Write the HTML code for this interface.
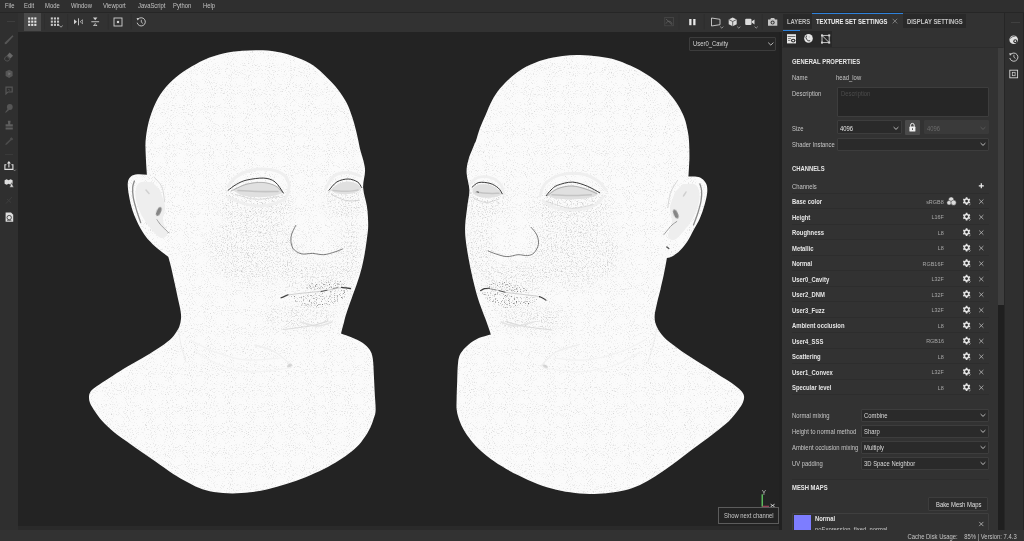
<!DOCTYPE html>
<html><head><meta charset="utf-8"><title>Substance 3D Painter</title>
<style>
*{box-sizing:border-box;margin:0;padding:0}
html,body{width:1024px;height:541px;overflow:hidden;background:#282828}
body{font-family:"Liberation Sans",sans-serif;font-size:6.4px;color:#c4c4c4;position:relative}
.abs{position:absolute}
#menubar{left:0;top:0;width:1024px;height:12px;background:#2f2f2f}
#menubar span{position:absolute;top:2px;font-size:6.6px;color:#c2c2c2;line-height:8px;transform:scaleX(.89);transform-origin:0 50%}
#toolbar{left:0;top:12px;width:782px;height:19.5px;background:#323232}
#leftbar{left:0;top:31px;width:18px;height:499px;background:#2f2f2f}
#viewport{left:18px;top:31.5px;width:761.3px;height:494.3px;background:#232323;overflow:hidden}
#panel{left:782px;top:12px;width:222.3px;height:518px;background:#323232;overflow:hidden}
#rightbar{left:1004.3px;top:12px;width:19.7px;height:518px;background:#2f2f2f}
#status{left:0;top:530px;width:1024px;height:11px;background:#323232}
.t{position:absolute;white-space:nowrap;line-height:8px;margin-top:0.5px;transform:scaleX(.89);transform-origin:0 50%}
.b{font-weight:bold;color:#e2e2e2}

#panel .t{font-size:6.6px;color:#c6c6c6}
#panel .b{font-weight:bold;color:#e6e6e6}
#panel .f{color:#a8a8a8;font-size:6.1px;text-align:right;transform-origin:100% 50%}
.sel{position:absolute;background:#2a2a2a;border:0.6px solid #3d3d3d;border-radius:1px}
.sep{position:absolute;left:10px;width:197px;height:0.7px;background:#2d2d2d}
</style></head><body>
<div id="menubar" class="abs">
<span style="left:5px">File</span><span style="left:24px">Edit</span><span style="left:45px">Mode</span><span style="left:71px">Window</span><span style="left:103px">Viewport</span><span style="left:138px">JavaScript</span><span style="left:173px">Python</span><span style="left:203px">Help</span>
</div>
<div id="toolbar" class="abs">

<div class="abs" style="left:0;top:0;width:18px;height:19px;background:#2f2f2f"></div>
<div class="abs" style="left:7.4px;top:9.4px;width:7.4px;height:0.9px;background:#3e3e3e"></div>
<div class="abs" style="left:0;top:-0.3px;width:1024px;height:0.7px;background:#262626;z-index:3"></div>
<div class="abs" style="left:24px;top:1.3px;width:17.2px;height:18.2px;background:#4a4a4a"></div>
<svg class="abs" style="left:0;top:0" width="782" height="19" viewBox="0 12 782 19">
<g fill="#e4e4e4">
<rect x="28.1" y="17.4" width="2.1" height="2.1"/><rect x="31.2" y="17.4" width="2.1" height="2.1"/><rect x="34.3" y="17.4" width="2.1" height="2.1"/>
<rect x="28.1" y="20.6" width="2.1" height="2.1"/><rect x="31.2" y="20.6" width="2.1" height="2.1"/><rect x="34.3" y="20.6" width="2.1" height="2.1"/>
<rect x="28.1" y="23.8" width="2.1" height="2.1"/><rect x="31.2" y="23.8" width="2.1" height="2.1"/><rect x="34.3" y="23.8" width="2.1" height="2.1"/>
</g>
<g fill="#c6c6c6">
<rect x="50.8" y="17.4" width="2.1" height="2.1"/><rect x="53.9" y="17.4" width="2.1" height="2.1"/><rect x="57" y="17.4" width="2.1" height="2.1"/>
<rect x="50.8" y="20.6" width="2.1" height="2.1"/><rect x="53.9" y="20.6" width="2.1" height="2.1"/><rect x="57" y="20.6" width="2.1" height="2.1"/>
<rect x="50.8" y="23.8" width="2.1" height="2.1"/><rect x="53.9" y="23.8" width="2.1" height="2.1"/><rect x="57" y="23.8" width="2.1" height="2.1"/>
</g>
<path d="M59.3,25.6 l1.7,1.6 l1.7,-1.6" fill="none" stroke="#bdbdbd" stroke-width="0.8"/>
<g stroke="#2b2b2b" stroke-width="0.6"><path d="M44.5,14v15.5M67.6,14v15.5M108.4,14v15.5M131.2,14v15.5M679,14v15.5M704.2,14v15.5M762.4,14v15.5"/></g>
<!-- symmetry -->
<g fill="#d0d0d0" stroke="none">
<path d="M74,19.3 l3,2.5 l-3,2.5z M82.8,19.3 l-3,2.5 l3,2.5z"/><rect x="78" y="18.3" width="0.9" height="7"/>
<path d="M82.3,20.3 l-1.8,1.5 l1.8,1.5z" fill="#323232"/>
</g>
<g fill="#d0d0d0"><path d="M93,17.6 h4.4 l-2.2,2.7z"/><rect x="91.3" y="21.3" width="7.8" height="0.9"/><path d="M93,26 h4.4 l-2.2,-2.9z M94.2,25.3 h2 l-1,-1.3z" fill-rule="evenodd"/></g>
<rect x="114" y="18" width="8" height="8" fill="none" stroke="#d0d0d0" stroke-width="0.9"/><rect x="116.9" y="20.9" width="2.2" height="2.2" fill="#d0d0d0"/>
<g fill="none" stroke="#d0d0d0" stroke-width="0.9"><path d="M138,19.3 a4.1,4.1 0 1 1 -0.8,3.4"/><path d="M141.3,19.8v2.4l1.6,1.2" stroke-width="0.8"/></g><path d="M136.6,18 l2.6,0.3 l-1.8,2.2z" fill="#d0d0d0"/>
<!-- right group -->
<g fill="none" stroke="#6a6a6a" stroke-width="0.7"><rect x="664.8" y="17.6" width="8.6" height="8.2" stroke="#4a4a4a"/><path d="M666,23.5 c1.5,-3 4.5,-3 6,0 M666,19 l6.3,5.8"/></g>
<g fill="#e8e8e8"><rect x="689.2" y="19" width="2.3" height="6.2"/><rect x="693.2" y="19" width="2.3" height="6.2"/></g>
<path d="M711.5,18 l8.5,1.3 v5.4 l-8.5,1.3z" fill="none" stroke="#cfcfcf" stroke-width="0.9"/>
<g fill="none" stroke="#a8a8a8" stroke-width="0.8"><path d="M720.2,26.6 l1.6,1.5 l1.6,-1.5 M737.2,26.6 l1.6,1.5 l1.6,-1.5 M754.6,26.6 l1.6,1.5 l1.6,-1.5"/></g>
<g><path d="M732.7,17.4 l4,2 v4.8 l-4,2 l-4,-2 v-4.8z" fill="#dcdcdc"/><path d="M728.9,19.6 l3.8,1.9 l3.8,-1.9 M732.7,21.5 v4.5" fill="none" stroke="#323232" stroke-width="0.7"/></g>
<g fill="#dcdcdc"><rect x="745.2" y="18.8" width="6.3" height="6.2" rx="1"/><path d="M751.8,21.2 l2.7,-1.8 v5 l-2.7,-1.8z"/></g>
<g><path d="M768,19.6 h2.2 l0.8,-1.5 h3.2 l0.8,1.5 h2.3 v6.2 h-9.3z" fill="#c4c4c4"/><circle cx="772.6" cy="22.6" r="2" fill="#323232"/><circle cx="772.6" cy="22.6" r="1.1" fill="#c4c4c4"/></g>
</svg>
</div>
<div id="leftbar" class="abs">
<svg class="abs" style="left:0;top:0" width="18" height="495" viewBox="0 31 18 495">
<g fill="#565656" stroke="none">
<path d="M4.9,42.6 L12.4,35.2 L13.5,36.3 L6.4,44 L4.7,44.2z"/>
<path d="M9.6,52.6 l3.4,3.2 l-2.6,2.8 l-3.4,-3.2z" fill="#686868"/><path d="M6.6,56 l3.4,3.2 l-1.7,1.8 h-2 l-1.6,-1.6 v-1.4z" fill="none" stroke="#5c5c5c" stroke-width="0.8"/>
<path d="M9.1,69.8 l3.5,1.7 v4.6 l-3.5,2 l-3.5,-2 v-4.6z"/><path d="M8.4,72.2 l2.4,1.6 l-2.4,1.6z" fill="#747474"/>
<path d="M5.4,86.6 h7.4 v6 h-4.6 l-2.8,2.6z M6.6,87.8 v4.6 l1.2,-1 h3.8 v-3.6z" fill-rule="evenodd"/><path d="M8.2,89.2 l2,1.4" stroke="#565656" stroke-width="0.8"/>
<circle cx="9.8" cy="107" r="2.9"/><path d="M8,108.4 l1.4,1.4 l-3.6,3 l-0.6,-0.6z"/>
<path d="M7.8,120.8 h2.8 l-0.4,3.4 h2.6 v2.4 h-7.2 v-2.4 h2.6z M5.6,127.6 h7.2 v1.8 h-7.2z" fill="#5e5e5e"/>
<path d="M11.4,137.2 l1.9,1.9 l-1.4,1.4 l-0.5,-0.5 l-4.4,4.4 l-1.8,0.7 l0.7,-1.8 l4.4,-4.4 l-0.5,-0.5z" fill="#4c4c4c"/>
</g>
<rect x="5" y="154.2" width="8" height="0.7" fill="#404040"/>
<g fill="none" stroke="#e0e0e0" stroke-width="1.1"><path d="M6.4,164.8 h-1.5 v4.6 h8 v-4.6 h-1.5 M8.9,167.4 v-5.4"/></g><path d="M6.9,163.6 l2,-2.6 l2,2.6z" fill="#e0e0e0"/>
<path d="M13.4,169.6 l1.2,1.3 l1.2,-1.3" fill="none" stroke="#9a9a9a" stroke-width="0.7"/>
<g fill="#dedede"><path d="M4.6,180.2 l2,-1 l2,1 l2,-1 l2,1 v3.6 l-2,1 l-2,-1 l-2,1 l-2,-1z"/><path d="M9.6,187.2 l2,-4.4 l2,4.4z" fill="#dedede" stroke="#2f2f2f" stroke-width="0.5"/></g>
<path d="M6,203.6 l6,-6.6 M7,199 l4,3.6" stroke="#3d3d3d" stroke-width="1" fill="none"/>
<g><path d="M5.6,212.6 h5.4 l2.2,2.2 v6.9 h-7.6z" fill="#dedede"/><circle cx="9.2" cy="217.6" r="2.2" fill="none" stroke="#2f2f2f" stroke-width="0.8"/><path d="M7,220.4 h4.4" stroke="#2f2f2f" stroke-width="0.6"/></g>
</svg>
</div>
<div id="viewport" class="abs">
<svg class="abs" style="left:0;top:-0.5px" width="761" height="495" viewBox="18 31 761 495">
<defs>
<filter id="nz" x="0" y="0" width="100%" height="100%" color-interpolation-filters="sRGB"><feTurbulence type="fractalNoise" baseFrequency="0.95" numOctaves="2" seed="7"/><feColorMatrix type="matrix" values="0 0 0 0 0.8  0 0 0 0 0.8  0 0 0 0 0.8  2.4 0 0 0 -1.34"/></filter>
<filter id="nz2" x="0" y="0" width="100%" height="100%" color-interpolation-filters="sRGB"><feTurbulence type="fractalNoise" baseFrequency="0.8" numOctaves="2" seed="11"/><feColorMatrix type="matrix" values="0 0 0 0 0.72  0 0 0 0 0.72  0 0 0 0 0.72  0 2.4 0 0 -1.3"/></filter>
<filter id="nz3" x="0" y="0" width="100%" height="100%" color-interpolation-filters="sRGB"><feTurbulence type="fractalNoise" baseFrequency="0.85" numOctaves="2" seed="23" result="t"/><feColorMatrix in="t" type="matrix" values="0 0 0 0 0.42  0 0 0 0 0.42  0 0 0 0 0.42  0 0 3.2 0 -1.75" result="n"/><feComposite in="n" in2="SourceGraphic" operator="in"/></filter>
<filter id="bl" x="-20%" y="-20%" width="140%" height="140%"><feGaussianBlur stdDeviation="5"/></filter>
<filter id="bs2" x="-30%" y="-30%" width="160%" height="160%"><feGaussianBlur stdDeviation="0.35"/></filter>
<filter id="bs" x="-20%" y="-20%" width="140%" height="140%"><feGaussianBlur stdDeviation="0.7"/></filter>
<clipPath id="cL"><path d="M146.9,174.7 C146.6,169.4 146.1,164.4 145.9,158.8 C145.7,153.2 145.2,146.7 145.6,141.0 C146.0,135.3 146.9,129.7 148.1,124.4 C149.3,119.1 150.8,114.4 152.8,109.4 C154.8,104.4 157.0,99.2 160.3,94.4 C163.6,89.6 168.0,84.5 172.5,80.3 C177.0,76.1 182.2,72.5 187.5,69.1 C192.8,65.7 198.5,62.3 204.4,59.7 C210.3,57.1 216.8,55.0 223.1,53.5 C229.4,52.0 235.6,51.3 242.2,50.8 C248.8,50.3 256.4,50.0 262.8,50.3 C269.2,50.6 274.8,51.4 280.6,52.6 C286.4,53.9 292.1,55.7 297.5,57.8 C302.9,59.9 308.1,62.0 313.0,65.3 C317.9,68.6 322.7,73.4 326.9,77.5 C331.1,81.6 334.8,85.5 338.1,89.7 C341.4,93.9 344.2,98.3 346.6,102.8 C349.0,107.3 350.6,112.4 352.2,116.9 C353.8,121.4 354.9,126.0 355.9,130.0 C356.9,134.0 357.7,137.8 358.4,141.1 C359.1,144.4 359.2,145.4 360.3,150.0 C361.4,154.6 364.5,162.6 365.0,168.8 C365.5,175.1 362.8,181.2 363.1,187.5 C363.4,193.8 366.0,200.1 366.9,206.3 C367.8,212.6 368.2,219.6 368.2,225.0 C368.2,230.4 367.6,233.3 366.9,238.8 C366.2,244.2 365.2,251.2 364.0,257.5 C362.8,263.8 361.3,270.0 359.4,276.2 C357.5,282.5 355.0,288.8 352.8,295.0 C350.6,301.2 347.8,309.1 346.3,313.8 C344.8,318.4 344.7,319.8 343.8,323.1 C342.9,326.4 341.9,330.0 341.0,333.4 C344.4,334.7 347.7,335.6 351.3,337.2 C354.9,338.8 359.4,340.6 362.5,342.8 C365.6,345.0 368.3,347.6 370.0,350.3 C371.7,353.0 372.2,354.9 372.8,358.8 C373.4,362.7 373.5,368.2 373.8,373.8 C374.1,379.4 374.4,386.4 374.7,392.5 C375.0,398.6 375.8,406.0 375.6,410.5 C375.4,415.0 374.5,416.0 373.4,419.4 C372.3,422.8 370.8,426.9 368.8,430.6 C366.8,434.4 364.1,438.4 361.3,441.9 C358.5,445.3 355.6,448.2 351.9,451.3 C348.1,454.4 343.5,457.6 338.8,460.6 C334.1,463.6 329.4,466.3 323.8,469.1 C318.2,471.9 311.2,475.0 305.0,477.5 C298.8,480.0 292.5,482.2 286.3,484.1 C280.1,486.1 273.9,487.8 267.8,489.2 C261.8,490.6 255.9,491.6 250.0,492.3 C244.1,493.0 238.5,493.4 232.5,493.4 C226.5,493.4 219.4,493.0 213.8,492.1 C208.2,491.2 203.8,489.8 198.8,487.8 C193.8,485.8 188.8,483.1 183.8,480.3 C178.8,477.5 174.4,474.6 168.8,470.9 C163.2,467.1 156.2,462.2 150.0,457.8 C143.8,453.4 137.2,448.9 131.3,444.7 C125.4,440.5 119.2,436.4 114.4,432.5 C109.6,428.6 105.4,424.6 102.2,421.1 C99.0,417.6 97.0,414.5 95.0,411.5 C93.0,408.5 91.0,405.8 90.0,403.1 C89.0,400.5 88.8,397.8 89.1,395.6 C89.4,393.4 90.2,391.9 91.9,390.0 C93.6,388.1 96.0,386.8 99.4,384.4 C102.8,382.0 107.8,378.9 112.5,375.9 C117.2,372.9 122.5,369.6 127.5,366.6 C132.5,363.6 137.5,361.1 142.5,358.1 C147.5,355.1 152.9,351.9 157.5,348.8 C162.1,345.7 166.9,342.4 170.0,339.7 C173.1,337.0 174.4,334.8 176.0,332.5 C177.6,330.2 178.7,328.3 179.5,326.0 C180.3,323.7 180.8,321.2 181.0,318.8 C181.2,316.4 181.1,314.8 180.6,311.3 C180.1,307.9 178.8,302.8 177.8,298.1 C176.8,293.4 175.7,288.1 174.6,283.1 C173.5,278.1 172.3,272.5 171.3,268.1 C170.3,263.7 169.4,260.6 168.4,256.9 C167.2,256.0 166.7,255.7 164.7,254.1 C162.7,252.5 158.9,249.8 156.3,247.5 C153.7,245.2 151.0,242.5 149.1,240.5 C147.2,238.5 146.8,238.3 145.0,235.6 C143.2,232.9 140.4,228.4 138.4,224.4 C136.4,220.4 134.4,216.0 132.8,211.3 C131.2,206.6 129.9,201.0 129.1,196.3 C128.3,191.6 127.5,186.4 127.8,183.1 C128.1,179.8 129.3,178.1 130.9,176.6 C132.5,175.1 134.8,174.6 137.5,174.3 C140.2,174.0 143.8,174.6 146.9,174.7 Z"/></clipPath>
<clipPath id="cR"><path d="M475.9,141.1 C476.9,138.3 478.4,132.4 480.0,128.1 C481.6,123.8 483.7,119.4 485.6,115.0 C487.5,110.6 489.0,106.3 491.3,101.9 C493.6,97.5 496.3,93.0 499.7,88.8 C503.1,84.6 507.4,80.3 511.9,76.6 C516.4,72.8 521.6,69.1 526.9,66.3 C532.2,63.5 537.9,61.4 543.8,59.7 C549.7,58.0 556.5,56.7 562.5,55.9 C568.5,55.1 574.0,54.9 580.0,55.0 C586.0,55.1 592.5,55.6 598.7,56.5 C605.0,57.4 611.5,58.5 617.5,60.4 C623.5,62.3 629.6,65.1 635.0,67.8 C640.4,70.5 645.3,73.4 650.0,76.6 C654.7,79.8 659.4,83.5 663.1,86.9 C666.9,90.3 669.7,93.6 672.5,97.2 C675.3,100.8 678.0,104.8 680.0,108.4 C682.0,112.0 683.5,115.2 684.7,118.8 C686.0,122.4 686.8,126.3 687.5,130.0 C688.2,133.7 688.7,136.2 689.0,141.0 C689.3,145.8 689.5,152.9 689.4,158.8 C689.3,164.7 688.7,170.7 688.4,176.6 C690.6,176.6 692.8,176.3 695.0,176.6 C697.2,176.9 699.7,177.2 701.6,178.4 C703.5,179.7 705.4,181.8 706.3,184.1 C707.2,186.4 707.5,188.9 707.2,192.5 C706.9,196.1 705.6,201.2 704.4,205.6 C703.1,210.0 701.5,214.7 699.7,218.8 C697.9,222.9 695.6,226.3 693.6,230.0 C691.6,233.7 689.8,237.8 687.5,241.2 C685.2,244.6 682.5,248.1 680.0,250.6 C677.5,253.1 674.7,255.1 672.5,256.3 C670.3,257.6 668.8,257.5 666.9,258.1 C666.0,263.1 665.2,267.8 664.1,273.1 C663.0,278.4 661.5,284.7 660.3,290.0 C659.0,295.3 657.5,300.5 656.6,305.0 C655.7,309.5 654.6,313.3 654.6,317.0 C654.6,320.7 655.4,323.7 656.9,327.0 C658.4,330.3 660.8,333.7 663.8,336.9 C666.8,340.1 671.0,343.2 675.0,346.3 C679.0,349.4 683.4,352.5 688.1,355.6 C692.8,358.7 698.1,361.9 703.1,365.0 C708.1,368.1 713.4,371.4 718.1,374.4 C722.8,377.4 727.5,380.1 731.3,382.8 C735.0,385.5 738.5,388.1 740.6,390.3 C742.7,392.5 743.6,393.9 744.0,395.9 C744.4,397.9 743.9,400.1 742.9,402.5 C741.9,404.9 740.6,406.9 738.2,410.0 C735.9,413.1 732.7,417.4 728.8,421.2 C724.9,424.9 719.8,428.7 715.0,432.5 C710.2,436.3 705.0,440.1 700.0,443.8 C695.0,447.6 690.0,451.2 685.0,455.0 C680.0,458.8 675.0,462.7 670.0,466.3 C665.0,469.9 660.0,473.5 655.0,476.6 C650.0,479.7 645.0,482.7 640.0,485.0 C635.0,487.3 630.0,489.0 625.0,490.3 C620.0,491.6 615.1,492.2 610.0,492.8 C604.9,493.4 600.2,494.0 594.4,494.0 C588.6,494.0 581.4,493.6 575.0,492.9 C568.6,492.2 562.5,491.2 556.3,489.7 C550.0,488.2 543.8,486.5 537.5,484.1 C531.2,481.8 524.7,478.6 518.8,475.6 C512.9,472.6 507.2,469.6 501.9,466.3 C496.6,463.0 491.4,459.5 486.9,455.9 C482.4,452.3 478.3,448.6 474.7,444.7 C471.1,440.8 467.8,436.4 465.3,432.5 C462.8,428.6 461.1,425.0 459.7,421.3 C458.3,417.6 457.3,414.1 456.8,410.5 C456.3,406.9 456.5,404.9 456.6,400.0 C456.7,395.1 456.9,387.6 457.2,381.3 C457.4,375.1 457.5,367.2 458.1,362.5 C458.7,357.8 459.2,356.1 460.9,353.1 C462.6,350.1 465.4,347.2 468.4,344.7 C471.4,342.2 475.1,339.8 478.8,338.1 C482.6,336.4 486.9,335.6 490.9,334.4 C489.4,330.0 487.8,325.3 486.3,321.2 C484.8,317.1 483.6,314.4 482.0,310.0 C480.4,305.6 478.5,300.6 476.9,295.0 C475.3,289.4 473.6,282.6 472.2,276.3 C470.8,270.1 469.5,263.8 468.4,257.5 C467.3,251.2 466.1,244.2 465.6,238.8 C465.1,233.4 464.9,230.6 465.2,225.0 C465.5,219.4 466.8,210.8 467.5,205.0 C468.2,199.2 469.5,195.3 469.4,190.0 C469.2,184.7 466.8,178.1 466.6,173.1 C466.4,168.1 467.1,164.7 468.4,160.0 C469.6,155.3 472.9,148.2 474.1,145.0 C475.4,141.8 474.9,143.9 475.9,141.1 Z"/></clipPath>
<mask id="mL" maskUnits="userSpaceOnUse" x="18" y="31" width="761" height="495"><g filter="url(#bl)" fill="#fff"><ellipse cx="255" cy="205" rx="38" ry="22"/><ellipse cx="345" cy="200" rx="20" ry="20"/><ellipse cx="255" cy="250" rx="45" ry="35"/><ellipse cx="315" cy="275" rx="35" ry="14"/><ellipse cx="300" cy="318" rx="35" ry="12"/><ellipse cx="350" cy="250" rx="12" ry="30"/></g></mask>
<mask id="mR" maskUnits="userSpaceOnUse" x="18" y="31" width="761" height="495"><g filter="url(#bl)" fill="#fff"><ellipse cx="572" cy="208" rx="40" ry="22"/><ellipse cx="487" cy="203" rx="20" ry="20"/><ellipse cx="575" cy="252" rx="45" ry="35"/><ellipse cx="515" cy="277" rx="35" ry="14"/><ellipse cx="532" cy="320" rx="35" ry="12"/><ellipse cx="480" cy="250" rx="12" ry="30"/></g></mask>
</defs>
<!-- left head -->
<path id="headL" fill="#fbfbfb" d="M146.9,174.7 C146.6,169.4 146.1,164.4 145.9,158.8 C145.7,153.2 145.2,146.7 145.6,141.0 C146.0,135.3 146.9,129.7 148.1,124.4 C149.3,119.1 150.8,114.4 152.8,109.4 C154.8,104.4 157.0,99.2 160.3,94.4 C163.6,89.6 168.0,84.5 172.5,80.3 C177.0,76.1 182.2,72.5 187.5,69.1 C192.8,65.7 198.5,62.3 204.4,59.7 C210.3,57.1 216.8,55.0 223.1,53.5 C229.4,52.0 235.6,51.3 242.2,50.8 C248.8,50.3 256.4,50.0 262.8,50.3 C269.2,50.6 274.8,51.4 280.6,52.6 C286.4,53.9 292.1,55.7 297.5,57.8 C302.9,59.9 308.1,62.0 313.0,65.3 C317.9,68.6 322.7,73.4 326.9,77.5 C331.1,81.6 334.8,85.5 338.1,89.7 C341.4,93.9 344.2,98.3 346.6,102.8 C349.0,107.3 350.6,112.4 352.2,116.9 C353.8,121.4 354.9,126.0 355.9,130.0 C356.9,134.0 357.7,137.8 358.4,141.1 C359.1,144.4 359.2,145.4 360.3,150.0 C361.4,154.6 364.5,162.6 365.0,168.8 C365.5,175.1 362.8,181.2 363.1,187.5 C363.4,193.8 366.0,200.1 366.9,206.3 C367.8,212.6 368.2,219.6 368.2,225.0 C368.2,230.4 367.6,233.3 366.9,238.8 C366.2,244.2 365.2,251.2 364.0,257.5 C362.8,263.8 361.3,270.0 359.4,276.2 C357.5,282.5 355.0,288.8 352.8,295.0 C350.6,301.2 347.8,309.1 346.3,313.8 C344.8,318.4 344.7,319.8 343.8,323.1 C342.9,326.4 341.9,330.0 341.0,333.4 C344.4,334.7 347.7,335.6 351.3,337.2 C354.9,338.8 359.4,340.6 362.5,342.8 C365.6,345.0 368.3,347.6 370.0,350.3 C371.7,353.0 372.2,354.9 372.8,358.8 C373.4,362.7 373.5,368.2 373.8,373.8 C374.1,379.4 374.4,386.4 374.7,392.5 C375.0,398.6 375.8,406.0 375.6,410.5 C375.4,415.0 374.5,416.0 373.4,419.4 C372.3,422.8 370.8,426.9 368.8,430.6 C366.8,434.4 364.1,438.4 361.3,441.9 C358.5,445.3 355.6,448.2 351.9,451.3 C348.1,454.4 343.5,457.6 338.8,460.6 C334.1,463.6 329.4,466.3 323.8,469.1 C318.2,471.9 311.2,475.0 305.0,477.5 C298.8,480.0 292.5,482.2 286.3,484.1 C280.1,486.1 273.9,487.8 267.8,489.2 C261.8,490.6 255.9,491.6 250.0,492.3 C244.1,493.0 238.5,493.4 232.5,493.4 C226.5,493.4 219.4,493.0 213.8,492.1 C208.2,491.2 203.8,489.8 198.8,487.8 C193.8,485.8 188.8,483.1 183.8,480.3 C178.8,477.5 174.4,474.6 168.8,470.9 C163.2,467.1 156.2,462.2 150.0,457.8 C143.8,453.4 137.2,448.9 131.3,444.7 C125.4,440.5 119.2,436.4 114.4,432.5 C109.6,428.6 105.4,424.6 102.2,421.1 C99.0,417.6 97.0,414.5 95.0,411.5 C93.0,408.5 91.0,405.8 90.0,403.1 C89.0,400.5 88.8,397.8 89.1,395.6 C89.4,393.4 90.2,391.9 91.9,390.0 C93.6,388.1 96.0,386.8 99.4,384.4 C102.8,382.0 107.8,378.9 112.5,375.9 C117.2,372.9 122.5,369.6 127.5,366.6 C132.5,363.6 137.5,361.1 142.5,358.1 C147.5,355.1 152.9,351.9 157.5,348.8 C162.1,345.7 166.9,342.4 170.0,339.7 C173.1,337.0 174.4,334.8 176.0,332.5 C177.6,330.2 178.7,328.3 179.5,326.0 C180.3,323.7 180.8,321.2 181.0,318.8 C181.2,316.4 181.1,314.8 180.6,311.3 C180.1,307.9 178.8,302.8 177.8,298.1 C176.8,293.4 175.7,288.1 174.6,283.1 C173.5,278.1 172.3,272.5 171.3,268.1 C170.3,263.7 169.4,260.6 168.4,256.9 C167.2,256.0 166.7,255.7 164.7,254.1 C162.7,252.5 158.9,249.8 156.3,247.5 C153.7,245.2 151.0,242.5 149.1,240.5 C147.2,238.5 146.8,238.3 145.0,235.6 C143.2,232.9 140.4,228.4 138.4,224.4 C136.4,220.4 134.4,216.0 132.8,211.3 C131.2,206.6 129.9,201.0 129.1,196.3 C128.3,191.6 127.5,186.4 127.8,183.1 C128.1,179.8 129.3,178.1 130.9,176.6 C132.5,175.1 134.8,174.6 137.5,174.3 C140.2,174.0 143.8,174.6 146.9,174.7 Z"/>
<g clip-path="url(#cL)"><rect x="80" y="40" width="305" height="460" filter="url(#nz)"/><g mask="url(#mL)"><rect x="80" y="40" width="305" height="460" filter="url(#nz2)"/></g><path d="M228.1,186.5 C229.4,184.9 232.3,179.7 236.0,177.0 C239.7,174.3 244.3,171.8 250.0,170.5 C255.7,169.2 264.3,168.8 270.0,169.5 C275.7,170.2 280.8,172.6 284.0,175.0 C287.2,177.4 288.3,181.2 289.0,184.0 C289.7,186.8 288.2,190.7 288.0,192.0" fill="none" stroke="#efefef" stroke-width="3" stroke-linecap="round" filter="url(#bs)"/><path d="M228.0,197.0 C230.8,198.2 238.8,202.6 245.0,204.0 C251.2,205.4 258.7,206.2 265.0,205.5 C271.3,204.8 279.2,202.1 283.0,200.0 C286.8,197.9 287.2,194.2 288.0,193.0" fill="none" stroke="#efefef" stroke-width="2.8" stroke-linecap="round" filter="url(#bs)"/><path d="M233.0,190.5 C235.2,189.4 241.2,185.4 246.0,184.0 C250.8,182.6 257.2,181.9 262.0,182.2 C266.8,182.4 271.6,183.8 275.0,185.5 C278.4,187.2 283.3,190.5 282.5,192.3 C281.7,194.1 275.1,195.7 270.0,196.5 C264.9,197.3 257.0,197.3 252.0,197.0 C247.0,196.7 242.0,194.9 240.0,194.5 Z" fill="#e0e0e0" /><path d="M238.0,190.5 C241.3,190.7 251.3,191.3 258.0,191.5 C264.7,191.7 274.7,191.5 278.0,191.5" fill="none" stroke="#c4c4c4" stroke-width="1.6" stroke-linecap="round" /><path d="M228.1,190.3 C229.5,189.3 233.4,186.0 236.5,184.3 C239.6,182.6 242.3,181.0 246.9,180.0 C251.5,179.0 259.1,177.8 263.8,178.1 C268.5,178.4 271.7,179.4 275.0,181.9 C278.3,184.4 282.0,191.2 283.4,193.1" fill="none" stroke="#2e2e2e" stroke-width="0.95" stroke-linecap="round" /><path d="M231.5,190.8 C233.9,189.7 240.9,185.8 246.0,184.4 C251.1,183.0 257.2,182.2 262.0,182.4 C266.8,182.6 271.5,183.9 275.0,185.6 C278.5,187.3 281.5,191.4 282.8,192.6" fill="none" stroke="#7a7a7a" stroke-width="0.5" stroke-linecap="round" /><path d="M236.0,194.6 C239.4,195.4 249.1,199.0 256.3,199.3 C263.5,199.6 275.2,196.9 279.0,196.4" fill="none" stroke="#c8c8c8" stroke-width="0.6" stroke-linecap="round" /><path d="M326.0,188.0 C327.3,186.0 330.3,178.6 334.0,176.0 C337.7,173.4 343.7,172.5 348.0,172.5 C352.3,172.5 358.0,175.4 360.0,176.0" fill="none" stroke="#efefef" stroke-width="2.8" stroke-linecap="round" filter="url(#bs)"/><path d="M330.0,190.5 C331.3,189.4 335.0,185.5 338.0,184.0 C341.0,182.5 344.8,181.5 348.0,181.5 C351.2,181.5 354.8,182.8 357.0,184.0 C359.2,185.2 361.8,187.4 361.0,189.0 C360.2,190.6 355.5,192.7 352.0,193.5 C348.5,194.3 342.0,193.9 340.0,194.0 Z" fill="#e0e0e0" /><path d="M333.0,190.5 C335.2,190.6 341.8,191.4 346.0,191.3 C350.2,191.2 356.0,190.2 358.0,190.0" fill="none" stroke="#c8c8c8" stroke-width="1.4" stroke-linecap="round" /><path d="M329.0,190.3 C330.3,188.9 333.7,183.8 336.9,181.9 C340.1,180.0 344.7,179.0 348.1,179.0 C351.5,179.0 355.2,180.5 357.5,181.9 C359.8,183.3 360.9,186.6 361.6,187.5" fill="none" stroke="#2e2e2e" stroke-width="0.95" stroke-linecap="round" /><path d="M331.3,194.5 C333.8,195.5 341.6,199.7 346.3,200.6 C351.0,201.5 357.2,200.3 359.4,200.2" fill="none" stroke="#c4c4c4" stroke-width="0.7" stroke-linecap="round" /><path d="M295.6,225.6 C294.8,227.5 291.5,233.2 291.0,236.9 C290.5,240.7 291.1,245.3 292.8,248.1 C294.5,250.9 298.0,252.9 301.3,253.8 C304.6,254.7 308.8,253.2 312.5,253.4 C316.2,253.6 320.1,254.9 323.8,254.7 C327.6,254.4 331.9,252.8 335.0,251.9 C338.1,251.0 341.2,249.5 342.5,249.0" fill="none" stroke="#5a5a5a" stroke-width="0.8" stroke-linecap="round" /><path d="M288.1,295.0 C290.1,294.7 295.9,293.9 300.0,293.4 C304.1,292.9 307.9,292.7 312.5,292.2 C317.1,291.7 322.5,291.1 327.5,290.3 C332.5,289.5 338.6,287.9 342.5,287.5 C346.4,287.1 349.6,287.8 351.0,287.9" fill="none" stroke="#c4c4c4" stroke-width="0.8" stroke-linecap="round" /><path d="M281.0,297.8 C281.5,297.6 282.8,297.1 284.0,296.6 C285.2,296.1 287.3,295.1 288.0,294.8" fill="none" stroke="#444" stroke-width="1.2" stroke-linecap="round" /><path d="M321.0,291.6 C322.0,291.4 326.0,290.4 327.0,290.2" fill="none" stroke="#555" stroke-width="1" stroke-linecap="round" /><path d="M333.0,288.6 C333.8,288.4 337.2,287.6 338.0,287.4" fill="none" stroke="#777" stroke-width="0.8" stroke-linecap="round" /><path d="M341.5,287.4 C342.2,287.5 344.5,287.6 346.0,287.8 C347.5,288.0 349.8,288.5 350.5,288.6" fill="none" stroke="#3c3c3c" stroke-width="1.2" stroke-linecap="round" /><path d="M152.0,182.0 C149.8,182.2 141.8,180.7 139.0,183.0 C136.2,185.3 135.2,190.8 135.5,196.0 C135.8,201.2 138.2,208.3 141.0,214.0 C143.8,219.7 148.7,226.0 152.0,230.0 C155.3,234.0 158.5,237.3 161.0,238.0 C163.5,238.7 166.7,237.0 167.0,234.0 C167.3,231.0 163.3,224.7 163.0,220.0 C162.7,215.3 165.5,211.0 165.0,206.0 C164.5,201.0 160.8,192.7 160.0,190.0 Z" fill="#eeeeee" filter="url(#bs)"/><path d="M134.4,181.0 C134.1,182.0 132.9,184.4 132.7,187.2 C132.5,190.0 132.7,193.9 133.3,197.6 C133.9,201.3 135.1,205.2 136.3,209.4 C137.5,213.6 140.0,220.5 140.7,222.7" fill="none" stroke="#8a8a8a" stroke-width="1.3" stroke-linecap="round" filter="url(#bs2)"/><path d="M154.4,177.5 C155.7,179.1 160.2,182.8 161.9,186.9 C163.6,191.0 164.2,199.4 164.7,201.9" fill="none" stroke="#d4d4d4" stroke-width="0.9" stroke-linecap="round" /><ellipse cx="158.8" cy="211.5" rx="2.1" ry="4.8" transform="rotate(24 158.8 211.5)" fill="#858585" filter="url(#bs)"/><path d="M157.0,219.7 C157.5,220.4 159.0,222.8 160.0,224.0 C161.0,225.2 161.4,225.6 162.9,227.1 C164.4,228.6 167.8,232.0 168.8,233.0" fill="none" stroke="#9a9a9a" stroke-width="1.0" stroke-linecap="round" filter="url(#bs2)"/><path d="M146.0,190.0 C146.5,190.6 148.5,192.9 149.0,193.5" fill="none" stroke="#d0d0d0" stroke-width="1.5" stroke-linecap="round" /><path d="M178.5,330.0 C178.9,332.5 179.8,339.7 181.0,345.0 C182.2,350.3 185.2,359.2 186.0,362.0" fill="none" stroke="#e6e6e6" stroke-width="0.7" stroke-linecap="round" /><path d="M190.0,340.0 C194.2,342.0 205.8,348.7 215.0,352.0 C224.2,355.3 234.2,359.0 245.0,360.0 C255.8,361.0 274.2,358.3 280.0,358.0" fill="none" stroke="#f2f2f2" stroke-width="1.2" stroke-linecap="round" /><path d="M196.0,352.0 C200.0,354.2 211.0,361.7 220.0,365.0 C229.0,368.3 238.3,371.5 250.0,372.0 C261.7,372.5 283.3,368.7 290.0,368.0" fill="none" stroke="#f3f3f3" stroke-width="1.2" stroke-linecap="round" /><path d="M255.0,345.0 C258.3,346.2 268.8,348.5 275.0,352.0 C281.2,355.5 289.2,363.7 292.0,366.0" fill="none" stroke="#efefef" stroke-width="1.4" stroke-linecap="round" /><path d="M300.0,322.0 C303.0,322.7 312.7,326.0 318.0,326.0 C323.3,326.0 329.7,322.7 332.0,322.0" fill="none" stroke="#e4e4e4" stroke-width="1.5" stroke-linecap="round" /><g filter="url(#nz3)"><path d="M290.0,296.5 C293.7,296.1 304.5,295.0 312.0,294.0 C319.5,293.0 328.8,291.2 335.0,290.5 C341.2,289.8 348.0,288.4 349.0,290.0 C350.0,291.6 345.5,297.2 341.0,300.0 C336.5,302.8 328.8,306.0 322.0,307.0 C315.2,308.0 303.7,306.2 300.0,306.0 Z" fill="#fff" /><path d="M300.0,290.5 C301.7,289.4 306.3,285.4 310.0,284.0 C313.7,282.6 317.7,282.7 322.0,282.0 C326.3,281.3 332.0,279.5 336.0,280.0 C340.0,280.5 347.5,283.5 346.0,285.0 C344.5,286.5 330.2,288.3 327.0,289.0 Z" fill="#fff" /></g><ellipse cx="289.5" cy="365.5" rx="2.8" ry="1.5" transform="rotate(-25 289.5 365.5)" fill="#d2d2d2" filter="url(#bs)"/><path d="M283.0,329.5 C285.8,329.2 294.7,328.2 300.0,327.5 C305.3,326.8 310.3,326.1 315.0,325.0 C319.7,323.9 325.8,321.7 328.0,321.0" fill="none" stroke="#dcdcdc" stroke-width="1.2" stroke-linecap="round" filter="url(#bs2)"/></g>
<!-- right head -->
<path id="headR" fill="#fbfbfb" d="M475.9,141.1 C476.9,138.3 478.4,132.4 480.0,128.1 C481.6,123.8 483.7,119.4 485.6,115.0 C487.5,110.6 489.0,106.3 491.3,101.9 C493.6,97.5 496.3,93.0 499.7,88.8 C503.1,84.6 507.4,80.3 511.9,76.6 C516.4,72.8 521.6,69.1 526.9,66.3 C532.2,63.5 537.9,61.4 543.8,59.7 C549.7,58.0 556.5,56.7 562.5,55.9 C568.5,55.1 574.0,54.9 580.0,55.0 C586.0,55.1 592.5,55.6 598.7,56.5 C605.0,57.4 611.5,58.5 617.5,60.4 C623.5,62.3 629.6,65.1 635.0,67.8 C640.4,70.5 645.3,73.4 650.0,76.6 C654.7,79.8 659.4,83.5 663.1,86.9 C666.9,90.3 669.7,93.6 672.5,97.2 C675.3,100.8 678.0,104.8 680.0,108.4 C682.0,112.0 683.5,115.2 684.7,118.8 C686.0,122.4 686.8,126.3 687.5,130.0 C688.2,133.7 688.7,136.2 689.0,141.0 C689.3,145.8 689.5,152.9 689.4,158.8 C689.3,164.7 688.7,170.7 688.4,176.6 C690.6,176.6 692.8,176.3 695.0,176.6 C697.2,176.9 699.7,177.2 701.6,178.4 C703.5,179.7 705.4,181.8 706.3,184.1 C707.2,186.4 707.5,188.9 707.2,192.5 C706.9,196.1 705.6,201.2 704.4,205.6 C703.1,210.0 701.5,214.7 699.7,218.8 C697.9,222.9 695.6,226.3 693.6,230.0 C691.6,233.7 689.8,237.8 687.5,241.2 C685.2,244.6 682.5,248.1 680.0,250.6 C677.5,253.1 674.7,255.1 672.5,256.3 C670.3,257.6 668.8,257.5 666.9,258.1 C666.0,263.1 665.2,267.8 664.1,273.1 C663.0,278.4 661.5,284.7 660.3,290.0 C659.0,295.3 657.5,300.5 656.6,305.0 C655.7,309.5 654.6,313.3 654.6,317.0 C654.6,320.7 655.4,323.7 656.9,327.0 C658.4,330.3 660.8,333.7 663.8,336.9 C666.8,340.1 671.0,343.2 675.0,346.3 C679.0,349.4 683.4,352.5 688.1,355.6 C692.8,358.7 698.1,361.9 703.1,365.0 C708.1,368.1 713.4,371.4 718.1,374.4 C722.8,377.4 727.5,380.1 731.3,382.8 C735.0,385.5 738.5,388.1 740.6,390.3 C742.7,392.5 743.6,393.9 744.0,395.9 C744.4,397.9 743.9,400.1 742.9,402.5 C741.9,404.9 740.6,406.9 738.2,410.0 C735.9,413.1 732.7,417.4 728.8,421.2 C724.9,424.9 719.8,428.7 715.0,432.5 C710.2,436.3 705.0,440.1 700.0,443.8 C695.0,447.6 690.0,451.2 685.0,455.0 C680.0,458.8 675.0,462.7 670.0,466.3 C665.0,469.9 660.0,473.5 655.0,476.6 C650.0,479.7 645.0,482.7 640.0,485.0 C635.0,487.3 630.0,489.0 625.0,490.3 C620.0,491.6 615.1,492.2 610.0,492.8 C604.9,493.4 600.2,494.0 594.4,494.0 C588.6,494.0 581.4,493.6 575.0,492.9 C568.6,492.2 562.5,491.2 556.3,489.7 C550.0,488.2 543.8,486.5 537.5,484.1 C531.2,481.8 524.7,478.6 518.8,475.6 C512.9,472.6 507.2,469.6 501.9,466.3 C496.6,463.0 491.4,459.5 486.9,455.9 C482.4,452.3 478.3,448.6 474.7,444.7 C471.1,440.8 467.8,436.4 465.3,432.5 C462.8,428.6 461.1,425.0 459.7,421.3 C458.3,417.6 457.3,414.1 456.8,410.5 C456.3,406.9 456.5,404.9 456.6,400.0 C456.7,395.1 456.9,387.6 457.2,381.3 C457.4,375.1 457.5,367.2 458.1,362.5 C458.7,357.8 459.2,356.1 460.9,353.1 C462.6,350.1 465.4,347.2 468.4,344.7 C471.4,342.2 475.1,339.8 478.8,338.1 C482.6,336.4 486.9,335.6 490.9,334.4 C489.4,330.0 487.8,325.3 486.3,321.2 C484.8,317.1 483.6,314.4 482.0,310.0 C480.4,305.6 478.5,300.6 476.9,295.0 C475.3,289.4 473.6,282.6 472.2,276.3 C470.8,270.1 469.5,263.8 468.4,257.5 C467.3,251.2 466.1,244.2 465.6,238.8 C465.1,233.4 464.9,230.6 465.2,225.0 C465.5,219.4 466.8,210.8 467.5,205.0 C468.2,199.2 469.5,195.3 469.4,190.0 C469.2,184.7 466.8,178.1 466.6,173.1 C466.4,168.1 467.1,164.7 468.4,160.0 C469.6,155.3 472.9,148.2 474.1,145.0 C475.4,141.8 474.9,143.9 475.9,141.1 Z"/>
<g clip-path="url(#cR)"><rect x="450" y="40" width="305" height="460" filter="url(#nz)"/><g mask="url(#mR)"><rect x="450" y="40" width="305" height="460" filter="url(#nz2)"/></g><path d="M470.0,184.0 C471.3,182.9 474.3,178.5 478.0,177.5 C481.7,176.5 488.2,176.8 492.0,178.0 C495.8,179.2 499.0,182.3 501.0,185.0 C503.0,187.7 503.5,192.5 504.0,194.0" fill="none" stroke="#efefef" stroke-width="2.8" stroke-linecap="round" filter="url(#bs)"/><path d="M472.5,189.0 C473.6,188.2 476.1,185.2 479.0,184.5 C481.9,183.8 486.8,184.2 490.0,185.0 C493.2,185.8 496.1,187.9 498.0,189.5 C499.9,191.1 502.5,193.2 501.5,194.5 C500.5,195.8 495.6,197.1 492.0,197.5 C488.4,197.9 483.2,197.7 480.0,197.0 C476.8,196.3 474.2,194.1 473.0,193.5 Z" fill="#e0e0e0" /><path d="M476.0,192.3 C478.0,192.5 484.2,193.1 488.0,193.3 C491.8,193.5 497.2,193.3 499.0,193.3" fill="none" stroke="#c4c4c4" stroke-width="1.5" stroke-linecap="round" /><path d="M472.2,187.2 C473.3,186.4 475.8,183.1 478.8,182.5 C481.8,181.9 486.7,182.5 490.0,183.4 C493.3,184.3 496.4,186.4 498.4,188.1 C500.4,189.8 501.6,192.9 502.2,193.8" fill="none" stroke="#2e2e2e" stroke-width="0.95" stroke-linecap="round" /><path d="M474.0,198.5 C476.0,199.2 481.8,202.4 486.0,202.5 C490.2,202.6 496.8,199.6 499.0,199.0" fill="none" stroke="#cccccc" stroke-width="0.7" stroke-linecap="round" /><path d="M477.0,191.8 C477.3,191.9 478.3,192.1 478.6,192.2" fill="none" stroke="#444" stroke-width="0.9" stroke-linecap="round" /><path d="M540.0,196.0 C540.8,194.0 541.7,187.5 545.0,184.0 C548.3,180.5 553.8,176.7 560.0,175.0 C566.2,173.3 575.7,173.0 582.0,174.0 C588.3,175.0 594.0,178.3 598.0,181.0 C602.0,183.7 604.7,188.5 606.0,190.0" fill="none" stroke="#efefef" stroke-width="2.8" stroke-linecap="round" filter="url(#bs)"/><path d="M543.0,201.0 C545.2,202.2 550.7,206.5 556.0,208.0 C561.3,209.5 568.5,210.5 575.0,210.0 C581.5,209.5 590.3,207.2 595.0,205.0 C599.7,202.8 601.7,198.3 603.0,197.0" fill="none" stroke="#efefef" stroke-width="2.8" stroke-linecap="round" filter="url(#bs)"/><path d="M547.0,195.5 C548.5,194.3 552.2,190.2 556.0,188.5 C559.8,186.8 565.2,185.6 570.0,185.5 C574.8,185.4 580.3,186.7 585.0,188.0 C589.7,189.3 597.5,191.8 598.0,193.5 C598.5,195.2 592.7,197.0 588.0,198.0 C583.3,199.0 575.5,199.4 570.0,199.5 C564.5,199.6 557.5,198.7 555.0,198.5 Z" fill="#e0e0e0" /><path d="M552.0,194.7 C555.3,194.8 565.5,195.5 572.0,195.5 C578.5,195.5 588.1,194.8 591.3,194.7" fill="none" stroke="#c4c4c4" stroke-width="1.6" stroke-linecap="round" /><path d="M546.3,195.6 C547.1,194.7 549.1,191.7 551.0,190.0 C552.9,188.3 553.9,186.6 557.5,185.3 C561.1,184.0 567.5,181.9 572.5,182.1 C577.5,182.3 583.0,184.5 587.5,186.3 C592.0,188.1 597.7,191.7 599.7,192.8" fill="none" stroke="#2e2e2e" stroke-width="0.95" stroke-linecap="round" /><path d="M547.0,196.0 C548.8,194.8 553.3,190.5 557.5,188.8 C561.7,187.1 567.2,185.9 572.0,186.0 C576.8,186.1 581.9,187.9 586.0,189.2 C590.1,190.4 594.8,192.8 596.5,193.5" fill="none" stroke="#7a7a7a" stroke-width="0.5" stroke-linecap="round" /><path d="M546.3,201.3 C550.3,202.5 562.8,207.8 570.6,208.3 C578.4,208.9 589.4,205.2 593.1,204.6" fill="none" stroke="#c8c8c8" stroke-width="0.6" stroke-linecap="round" /><path d="M531.3,227.5 C532.2,228.8 535.7,232.2 536.9,235.0 C538.1,237.8 538.9,241.4 538.4,244.4 C537.9,247.4 535.9,250.9 534.1,252.8 C532.3,254.7 530.2,255.3 527.5,255.6 C524.8,255.9 521.5,254.5 518.1,254.7 C514.7,254.9 510.6,256.8 506.9,256.6 C503.1,256.5 498.7,254.8 495.6,253.8 C492.5,252.9 489.4,251.4 488.1,250.9" fill="none" stroke="#5a5a5a" stroke-width="0.8" stroke-linecap="round" /><path d="M488.1,288.4 C489.4,288.6 492.8,289.2 495.6,289.8 C498.4,290.4 500.9,291.5 505.0,292.2 C509.1,292.9 515.0,293.5 520.0,294.1 C525.0,294.7 531.7,295.4 535.0,295.9 C538.3,296.4 539.2,296.8 540.0,297.0" fill="none" stroke="#c4c4c4" stroke-width="0.8" stroke-linecap="round" /><path d="M539.5,296.6 C540.1,296.9 541.9,297.6 543.0,298.2 C544.1,298.8 545.5,299.9 546.0,300.2" fill="none" stroke="#444" stroke-width="1.2" stroke-linecap="round" /><path d="M499.0,290.6 C500.0,290.9 504.0,291.9 505.0,292.2" fill="none" stroke="#555" stroke-width="1" stroke-linecap="round" /><path d="M480.6,290.6 C481.2,290.3 483.0,289.0 484.5,288.6 C486.0,288.2 488.7,288.3 489.5,288.2" fill="none" stroke="#3c3c3c" stroke-width="1.2" stroke-linecap="round" /><path d="M491.0,289.0 C491.8,289.2 495.2,289.8 496.0,290.0" fill="none" stroke="#777" stroke-width="0.8" stroke-linecap="round" /><path d="M683.0,184.0 C685.2,184.2 693.2,182.7 696.0,185.0 C698.8,187.3 699.8,192.8 699.5,198.0 C699.2,203.2 696.8,210.3 694.0,216.0 C691.2,221.7 686.3,228.0 683.0,232.0 C679.7,236.0 676.5,239.3 674.0,240.0 C671.5,240.7 668.3,239.0 668.0,236.0 C667.7,233.0 671.7,226.7 672.0,222.0 C672.3,217.3 669.5,213.0 670.0,208.0 C670.5,203.0 674.2,194.7 675.0,192.0 Z" fill="#eeeeee" filter="url(#bs)"/><path d="M699.9,184.0 C700.2,185.1 701.4,187.7 701.6,190.5 C701.8,193.3 701.6,197.3 701.0,201.0 C700.4,204.7 699.2,208.5 698.0,212.5 C696.8,216.5 694.2,222.9 693.5,225.0" fill="none" stroke="#8a8a8a" stroke-width="1.3" stroke-linecap="round" filter="url(#bs2)"/><path d="M677.6,180.3 C676.4,182.3 672.2,188.0 670.6,192.5 C669.0,197.0 668.3,205.0 667.8,207.5" fill="none" stroke="#d4d4d4" stroke-width="0.9" stroke-linecap="round" /><ellipse cx="675.8" cy="214" rx="2.1" ry="4.8" transform="rotate(-24 675.8 214)" fill="#858585" filter="url(#bs)"/><path d="M664.0,234.5 C664.8,233.5 667.5,230.1 668.8,228.5 C670.1,226.9 670.7,226.2 672.0,225.0 C673.3,223.8 676.0,222.1 676.8,221.5" fill="none" stroke="#9a9a9a" stroke-width="1.0" stroke-linecap="round" filter="url(#bs2)"/><path d="M666.8,247.0 C667.1,247.3 668.5,248.3 668.8,248.6" fill="none" stroke="#555" stroke-width="1.4" stroke-linecap="round" /><path d="M686.0,192.0 C685.6,192.7 683.9,195.3 683.5,196.0" fill="none" stroke="#d0d0d0" stroke-width="1.5" stroke-linecap="round" /><path d="M657.0,328.0 C656.3,330.8 654.5,339.3 653.0,345.0 C651.5,350.7 648.8,359.2 648.0,362.0" fill="none" stroke="#e6e6e6" stroke-width="0.7" stroke-linecap="round" /><path d="M553.0,358.0 C558.3,358.3 573.8,361.0 585.0,360.0 C596.2,359.0 610.0,355.3 620.0,352.0 C630.0,348.7 640.8,342.0 645.0,340.0" fill="none" stroke="#f2f2f2" stroke-width="1.2" stroke-linecap="round" /><path d="M545.0,368.0 C550.8,368.7 568.3,372.5 580.0,372.0 C591.7,371.5 605.0,368.3 615.0,365.0 C625.0,361.7 635.8,354.2 640.0,352.0" fill="none" stroke="#f3f3f3" stroke-width="1.2" stroke-linecap="round" /><path d="M541.0,366.0 C543.5,363.7 549.8,355.5 556.0,352.0 C562.2,348.5 574.3,346.2 578.0,345.0" fill="none" stroke="#efefef" stroke-width="1.4" stroke-linecap="round" /><path d="M501.0,322.0 C503.5,322.7 510.7,326.0 516.0,326.0 C521.3,326.0 530.2,322.7 533.0,322.0" fill="none" stroke="#e4e4e4" stroke-width="1.5" stroke-linecap="round" /><g filter="url(#nz3)"><path d="M481.0,292.5 C483.3,292.4 489.3,291.4 495.0,292.0 C500.7,292.6 507.8,294.9 515.0,296.0 C522.2,297.1 535.8,297.0 538.0,298.5 C540.2,300.0 533.0,303.4 528.0,305.0 C523.0,306.6 514.3,308.3 508.0,308.0 C501.7,307.7 493.0,303.8 490.0,303.0 Z" fill="#fff" /><path d="M486.0,286.0 C487.7,285.2 492.3,281.5 496.0,281.0 C499.7,280.5 504.0,282.2 508.0,283.0 C512.0,283.8 516.3,284.3 520.0,286.0 C523.7,287.7 532.5,292.2 530.0,293.0 C527.5,293.8 509.2,290.9 505.0,290.5 Z" fill="#fff" /></g><ellipse cx="545.3" cy="366.3" rx="2.8" ry="1.5" transform="rotate(25 545.3 366.3)" fill="#d2d2d2" filter="url(#bs)"/><path d="M552.0,330.0 C549.2,329.7 540.3,328.8 535.0,328.0 C529.7,327.2 524.8,326.6 520.0,325.5 C515.2,324.4 508.3,322.2 506.0,321.5" fill="none" stroke="#dcdcdc" stroke-width="1.2" stroke-linecap="round" filter="url(#bs2)"/></g>
</svg>
<div class="sel" style="left:671.3px;top:5.4px;width:87.2px;height:13.8px;background:#262626;border-color:#3c3c3c"></div>
<span class="t" style="left:675px;top:8.4px;font-size:6.6px;color:#d4d4d4">User0_Cavity</span>
<svg class="abs" style="left:0;top:-0.5px" width="761" height="495" viewBox="18 31 761 495">
<path d="M768.2,42.6 l2.6,2.5 l2.6,-2.5" fill="none" stroke="#c8c8c8" stroke-width="0.9"/>
<rect x="761.5" y="494.3" width="1.5" height="12.4" fill="#5bb75b"/><rect x="762.5" y="505.8" width="6.5" height="0.9" fill="#c9506f"/>
<path d="M770.6,504.2 l4,2.6 m0,-2.6 l-4,2.6" stroke="#e0e0e0" stroke-width="0.9" fill="none"/>
</svg>
<span class="t" style="left:743.6px;top:457.1px;font-size:6.6px;color:#d0d0d0">Y</span>
<div class="abs" style="left:699.7px;top:475px;width:61.7px;height:17.6px;border:0.8px solid #5c5c5c;background:#232323"></div>
<span class="t" style="left:705.8px;top:480.1px;font-size:6.6px;color:#c8c8c8">Show next channel</span>
</div>
<div class="abs" style="left:779.3px;top:31.5px;width:3px;height:498.5px;background:#212121"></div>
<div class="abs" style="left:18px;top:525.8px;width:761.3px;height:4.2px;background:#2a2a2a"></div>
<div id="panel" class="abs">
<div class="abs" style="left:1px;top:1.5px;width:28.5px;height:15px;background:#292929"></div>
<div class="abs" style="left:120.6px;top:1.6px;width:63.6px;height:14.4px;background:#292929"></div>
<div class="abs" style="left:29.8px;top:0.7px;width:91.5px;height:1.3px;background:#2e82dc"></div>
<span class="t b" style="left:4.8px;top:5.2px;color:#bdbdbd">LAYERS</span>
<span class="t b" style="left:34.2px;top:5.2px;color:#f0f0f0">TEXTURE SET SETTINGS</span>
<span class="t b" style="left:125.0px;top:5.2px;color:#c4c4c4">DISPLAY SETTINGS</span>
<div class="abs" style="left:1px;top:19px;width:49.4px;height:15.6px;background:#282828"></div>
<div class="abs" style="left:1px;top:17.6px;width:17px;height:1.5px;background:#2e82dc"></div>
<div class="abs" style="left:0;top:35px;width:221px;height:0.6px;background:#2c2c2c"></div>
<span class="t b" style="left:10.0px;top:45.0px;">GENERAL PROPERTIES</span>
<span class="t " style="left:10.0px;top:61.6px;">Name</span>
<span class="t " style="left:54.4px;top:61.6px;">head_low</span>
<span class="t " style="left:10.0px;top:77.2px;">Description</span>
<div class="sel" style="left:55px;top:75px;width:152px;height:30.3px;background:#262626"></div>
<span class="t " style="left:59.0px;top:77.2px;color:#4c4c4c">Description</span>
<span class="t " style="left:10.0px;top:112.2px;">Size</span>
<div class="sel" style="left:55px;top:108px;width:64.5px;height:14.4px"></div>
<span class="t " style="left:58.4px;top:112.2px;color:#e4e4e4">4096</span>
<div class="abs" style="left:123px;top:108px;width:15px;height:15px;background:#4a4a4a;border-radius:1px"></div>
<div class="sel" style="left:141.6px;top:108px;width:65.4px;height:14.4px;background:#3a3a3a;border-color:#3a3a3a"></div>
<span class="t " style="left:145.2px;top:112.2px;color:#6a6a6a">4096</span>
<span class="t " style="left:10.0px;top:128.2px;">Shader Instance</span>
<div class="sel" style="left:55px;top:125.6px;width:152px;height:13px"></div>
<span class="t b" style="left:10.0px;top:152.2px;">CHANNELS</span>
<span class="t " style="left:10.0px;top:170.0px;">Channels</span>
<div class="sep" style="top:180.7px"></div>
<span class="t b" style="left:10.0px;top:185.6px;">Base color</span>
<span class="t f" style="right:60.6px;top:185.2px">sRGB8</span>
<div class="sep" style="top:196.2px"></div>
<span class="t b" style="left:10.0px;top:201.1px;">Height</span>
<span class="t f" style="right:60.6px;top:200.7px">L16F</span>
<div class="sep" style="top:211.7px"></div>
<span class="t b" style="left:10.0px;top:216.6px;">Roughness</span>
<span class="t f" style="right:60.6px;top:216.2px">L8</span>
<div class="sep" style="top:227.2px"></div>
<span class="t b" style="left:10.0px;top:232.1px;">Metallic</span>
<span class="t f" style="right:60.6px;top:231.7px">L8</span>
<div class="sep" style="top:242.7px"></div>
<span class="t b" style="left:10.0px;top:247.6px;">Normal</span>
<span class="t f" style="right:60.6px;top:247.2px">RGB16F</span>
<div class="sep" style="top:258.2px"></div>
<span class="t b" style="left:10.0px;top:263.1px;">User0_Cavity</span>
<span class="t f" style="right:60.6px;top:262.7px">L32F</span>
<div class="sep" style="top:273.7px"></div>
<span class="t b" style="left:10.0px;top:278.6px;">User2_DNM</span>
<span class="t f" style="right:60.6px;top:278.2px">L32F</span>
<div class="sep" style="top:289.2px"></div>
<span class="t b" style="left:10.0px;top:294.1px;">User3_Fuzz</span>
<span class="t f" style="right:60.6px;top:293.7px">L32F</span>
<div class="sep" style="top:304.7px"></div>
<span class="t b" style="left:10.0px;top:309.6px;">Ambient occlusion</span>
<span class="t f" style="right:60.6px;top:309.2px">L8</span>
<div class="sep" style="top:320.2px"></div>
<span class="t b" style="left:10.0px;top:325.1px;">User4_SSS</span>
<span class="t f" style="right:60.6px;top:324.7px">RGB16</span>
<div class="sep" style="top:335.7px"></div>
<span class="t b" style="left:10.0px;top:340.6px;">Scattering</span>
<span class="t f" style="right:60.6px;top:340.2px">L8</span>
<div class="sep" style="top:351.2px"></div>
<span class="t b" style="left:10.0px;top:356.1px;">User1_Convex</span>
<span class="t f" style="right:60.6px;top:355.7px">L32F</span>
<div class="sep" style="top:366.7px"></div>
<span class="t b" style="left:10.0px;top:371.6px;">Specular level</span>
<span class="t f" style="right:60.6px;top:371.2px">L8</span>
<div class="sep" style="top:382.2px"></div>
<span class="t " style="left:10.0px;top:399.2px;">Normal mixing</span>
<div class="sel" style="left:78.5px;top:396.5px;width:128.5px;height:13.2px"></div>
<span class="t " style="left:82.0px;top:399.2px;color:#dadada">Combine</span>
<span class="t " style="left:10.0px;top:415.2px;">Height to normal method</span>
<div class="sel" style="left:78.5px;top:412.6px;width:128.5px;height:13.2px"></div>
<span class="t " style="left:82.0px;top:415.2px;color:#dadada">Sharp</span>
<span class="t " style="left:10.0px;top:431.3px;">Ambient occlusion mixing</span>
<div class="sel" style="left:78.5px;top:428.6px;width:128.5px;height:13.2px"></div>
<span class="t " style="left:82.0px;top:431.3px;color:#dadada">Multiply</span>
<span class="t " style="left:10.0px;top:447.4px;">UV padding</span>
<div class="sel" style="left:78.5px;top:444.7px;width:128.5px;height:13.2px"></div>
<span class="t " style="left:82.0px;top:447.4px;color:#dadada">3D Space Neighbor</span>
<div class="sep" style="top:466.5px"></div>
<span class="t b" style="left:10.0px;top:471.4px;">MESH MAPS</span>
<div class="sel" style="left:145.6px;top:484.7px;width:60.5px;height:14.4px;background:#2c2c2c"></div>
<span class="t " style="left:153.7px;top:488.3px;color:#e0e0e0">Bake Mesh Maps</span>
<div class="sel" style="left:10px;top:500.8px;width:197px;height:20px;background:#323232;border-color:#3f3f3f"></div>
<div class="abs" style="left:12.4px;top:503px;width:17px;height:16px;background:#7d7dff"></div>
<span class="t b" style="left:32.6px;top:502.2px;">Normal</span>
<span class="t " style="left:32.6px;top:513.4px;">noExpression_fixed_normal</span>
<div class="abs" style="left:216.4px;top:36px;width:5.9px;height:482px;background:#1f1f1f"></div>
<div class="abs" style="left:216.4px;top:36px;width:5.9px;height:257.2px;background:#3e3e3e"></div>
<svg class="abs" style="left:0;top:0" width="221" height="517" viewBox="782 12 221 517"><path transform="translate(966.6,201.1)" d="M-0.90,-2.86 L-0.81,-3.81 L0.81,-3.81 L0.90,-2.86 L2.03,-2.21 L2.90,-2.61 L3.71,-1.21 L2.93,-0.65 L2.93,0.65 L3.71,1.21 L2.90,2.61 L2.03,2.21 L0.90,2.86 L0.81,3.81 L-0.81,3.81 L-0.90,2.86 L-2.03,2.21 L-2.90,2.61 L-3.71,1.21 L-2.93,0.65 L-2.93,-0.65 L-3.71,-1.21 L-2.90,-2.61 L-2.03,-2.21Z" fill="#e4e4e4"/><circle cx="966.6" cy="201.1" r="1.35" fill="#2c2c2c"/><path d="M968.3,203.4 h2.6 v2 h-2.6z" fill="#323232"/><path d="M968.6,204.0 l1,0.9 l1,-0.9" stroke="#e4e4e4" stroke-width="0.6" fill="none"/><path d="M979.2,199.5 l4.2,4.2 m0,-4.2 l-4.2,4.2" stroke="#cdcdcd" stroke-width="0.7" fill="none"/><path transform="translate(966.6,216.6)" d="M-0.90,-2.86 L-0.81,-3.81 L0.81,-3.81 L0.90,-2.86 L2.03,-2.21 L2.90,-2.61 L3.71,-1.21 L2.93,-0.65 L2.93,0.65 L3.71,1.21 L2.90,2.61 L2.03,2.21 L0.90,2.86 L0.81,3.81 L-0.81,3.81 L-0.90,2.86 L-2.03,2.21 L-2.90,2.61 L-3.71,1.21 L-2.93,0.65 L-2.93,-0.65 L-3.71,-1.21 L-2.90,-2.61 L-2.03,-2.21Z" fill="#e4e4e4"/><circle cx="966.6" cy="216.6" r="1.35" fill="#2c2c2c"/><path d="M968.3,218.9 h2.6 v2 h-2.6z" fill="#323232"/><path d="M968.6,219.5 l1,0.9 l1,-0.9" stroke="#e4e4e4" stroke-width="0.6" fill="none"/><path d="M979.2,215.0 l4.2,4.2 m0,-4.2 l-4.2,4.2" stroke="#cdcdcd" stroke-width="0.7" fill="none"/><path transform="translate(966.6,232.1)" d="M-0.90,-2.86 L-0.81,-3.81 L0.81,-3.81 L0.90,-2.86 L2.03,-2.21 L2.90,-2.61 L3.71,-1.21 L2.93,-0.65 L2.93,0.65 L3.71,1.21 L2.90,2.61 L2.03,2.21 L0.90,2.86 L0.81,3.81 L-0.81,3.81 L-0.90,2.86 L-2.03,2.21 L-2.90,2.61 L-3.71,1.21 L-2.93,0.65 L-2.93,-0.65 L-3.71,-1.21 L-2.90,-2.61 L-2.03,-2.21Z" fill="#e4e4e4"/><circle cx="966.6" cy="232.1" r="1.35" fill="#2c2c2c"/><path d="M968.3,234.4 h2.6 v2 h-2.6z" fill="#323232"/><path d="M968.6,235.0 l1,0.9 l1,-0.9" stroke="#e4e4e4" stroke-width="0.6" fill="none"/><path d="M979.2,230.5 l4.2,4.2 m0,-4.2 l-4.2,4.2" stroke="#cdcdcd" stroke-width="0.7" fill="none"/><path transform="translate(966.6,247.6)" d="M-0.90,-2.86 L-0.81,-3.81 L0.81,-3.81 L0.90,-2.86 L2.03,-2.21 L2.90,-2.61 L3.71,-1.21 L2.93,-0.65 L2.93,0.65 L3.71,1.21 L2.90,2.61 L2.03,2.21 L0.90,2.86 L0.81,3.81 L-0.81,3.81 L-0.90,2.86 L-2.03,2.21 L-2.90,2.61 L-3.71,1.21 L-2.93,0.65 L-2.93,-0.65 L-3.71,-1.21 L-2.90,-2.61 L-2.03,-2.21Z" fill="#e4e4e4"/><circle cx="966.6" cy="247.6" r="1.35" fill="#2c2c2c"/><path d="M968.3,249.9 h2.6 v2 h-2.6z" fill="#323232"/><path d="M968.6,250.5 l1,0.9 l1,-0.9" stroke="#e4e4e4" stroke-width="0.6" fill="none"/><path d="M979.2,246.0 l4.2,4.2 m0,-4.2 l-4.2,4.2" stroke="#cdcdcd" stroke-width="0.7" fill="none"/><path transform="translate(966.6,263.1)" d="M-0.90,-2.86 L-0.81,-3.81 L0.81,-3.81 L0.90,-2.86 L2.03,-2.21 L2.90,-2.61 L3.71,-1.21 L2.93,-0.65 L2.93,0.65 L3.71,1.21 L2.90,2.61 L2.03,2.21 L0.90,2.86 L0.81,3.81 L-0.81,3.81 L-0.90,2.86 L-2.03,2.21 L-2.90,2.61 L-3.71,1.21 L-2.93,0.65 L-2.93,-0.65 L-3.71,-1.21 L-2.90,-2.61 L-2.03,-2.21Z" fill="#e4e4e4"/><circle cx="966.6" cy="263.1" r="1.35" fill="#2c2c2c"/><path d="M968.3,265.4 h2.6 v2 h-2.6z" fill="#323232"/><path d="M968.6,266.0 l1,0.9 l1,-0.9" stroke="#e4e4e4" stroke-width="0.6" fill="none"/><path d="M979.2,261.5 l4.2,4.2 m0,-4.2 l-4.2,4.2" stroke="#cdcdcd" stroke-width="0.7" fill="none"/><path transform="translate(966.6,278.6)" d="M-0.90,-2.86 L-0.81,-3.81 L0.81,-3.81 L0.90,-2.86 L2.03,-2.21 L2.90,-2.61 L3.71,-1.21 L2.93,-0.65 L2.93,0.65 L3.71,1.21 L2.90,2.61 L2.03,2.21 L0.90,2.86 L0.81,3.81 L-0.81,3.81 L-0.90,2.86 L-2.03,2.21 L-2.90,2.61 L-3.71,1.21 L-2.93,0.65 L-2.93,-0.65 L-3.71,-1.21 L-2.90,-2.61 L-2.03,-2.21Z" fill="#e4e4e4"/><circle cx="966.6" cy="278.6" r="1.35" fill="#2c2c2c"/><path d="M968.3,280.9 h2.6 v2 h-2.6z" fill="#323232"/><path d="M968.6,281.5 l1,0.9 l1,-0.9" stroke="#e4e4e4" stroke-width="0.6" fill="none"/><path d="M979.2,277.0 l4.2,4.2 m0,-4.2 l-4.2,4.2" stroke="#cdcdcd" stroke-width="0.7" fill="none"/><path transform="translate(966.6,294.1)" d="M-0.90,-2.86 L-0.81,-3.81 L0.81,-3.81 L0.90,-2.86 L2.03,-2.21 L2.90,-2.61 L3.71,-1.21 L2.93,-0.65 L2.93,0.65 L3.71,1.21 L2.90,2.61 L2.03,2.21 L0.90,2.86 L0.81,3.81 L-0.81,3.81 L-0.90,2.86 L-2.03,2.21 L-2.90,2.61 L-3.71,1.21 L-2.93,0.65 L-2.93,-0.65 L-3.71,-1.21 L-2.90,-2.61 L-2.03,-2.21Z" fill="#e4e4e4"/><circle cx="966.6" cy="294.1" r="1.35" fill="#2c2c2c"/><path d="M968.3,296.4 h2.6 v2 h-2.6z" fill="#323232"/><path d="M968.6,297.0 l1,0.9 l1,-0.9" stroke="#e4e4e4" stroke-width="0.6" fill="none"/><path d="M979.2,292.5 l4.2,4.2 m0,-4.2 l-4.2,4.2" stroke="#cdcdcd" stroke-width="0.7" fill="none"/><path transform="translate(966.6,309.6)" d="M-0.90,-2.86 L-0.81,-3.81 L0.81,-3.81 L0.90,-2.86 L2.03,-2.21 L2.90,-2.61 L3.71,-1.21 L2.93,-0.65 L2.93,0.65 L3.71,1.21 L2.90,2.61 L2.03,2.21 L0.90,2.86 L0.81,3.81 L-0.81,3.81 L-0.90,2.86 L-2.03,2.21 L-2.90,2.61 L-3.71,1.21 L-2.93,0.65 L-2.93,-0.65 L-3.71,-1.21 L-2.90,-2.61 L-2.03,-2.21Z" fill="#e4e4e4"/><circle cx="966.6" cy="309.6" r="1.35" fill="#2c2c2c"/><path d="M968.3,311.9 h2.6 v2 h-2.6z" fill="#323232"/><path d="M968.6,312.5 l1,0.9 l1,-0.9" stroke="#e4e4e4" stroke-width="0.6" fill="none"/><path d="M979.2,308.0 l4.2,4.2 m0,-4.2 l-4.2,4.2" stroke="#cdcdcd" stroke-width="0.7" fill="none"/><path transform="translate(966.6,325.1)" d="M-0.90,-2.86 L-0.81,-3.81 L0.81,-3.81 L0.90,-2.86 L2.03,-2.21 L2.90,-2.61 L3.71,-1.21 L2.93,-0.65 L2.93,0.65 L3.71,1.21 L2.90,2.61 L2.03,2.21 L0.90,2.86 L0.81,3.81 L-0.81,3.81 L-0.90,2.86 L-2.03,2.21 L-2.90,2.61 L-3.71,1.21 L-2.93,0.65 L-2.93,-0.65 L-3.71,-1.21 L-2.90,-2.61 L-2.03,-2.21Z" fill="#e4e4e4"/><circle cx="966.6" cy="325.1" r="1.35" fill="#2c2c2c"/><path d="M968.3,327.4 h2.6 v2 h-2.6z" fill="#323232"/><path d="M968.6,328.0 l1,0.9 l1,-0.9" stroke="#e4e4e4" stroke-width="0.6" fill="none"/><path d="M979.2,323.5 l4.2,4.2 m0,-4.2 l-4.2,4.2" stroke="#cdcdcd" stroke-width="0.7" fill="none"/><path transform="translate(966.6,340.6)" d="M-0.90,-2.86 L-0.81,-3.81 L0.81,-3.81 L0.90,-2.86 L2.03,-2.21 L2.90,-2.61 L3.71,-1.21 L2.93,-0.65 L2.93,0.65 L3.71,1.21 L2.90,2.61 L2.03,2.21 L0.90,2.86 L0.81,3.81 L-0.81,3.81 L-0.90,2.86 L-2.03,2.21 L-2.90,2.61 L-3.71,1.21 L-2.93,0.65 L-2.93,-0.65 L-3.71,-1.21 L-2.90,-2.61 L-2.03,-2.21Z" fill="#e4e4e4"/><circle cx="966.6" cy="340.6" r="1.35" fill="#2c2c2c"/><path d="M968.3,342.9 h2.6 v2 h-2.6z" fill="#323232"/><path d="M968.6,343.5 l1,0.9 l1,-0.9" stroke="#e4e4e4" stroke-width="0.6" fill="none"/><path d="M979.2,339.0 l4.2,4.2 m0,-4.2 l-4.2,4.2" stroke="#cdcdcd" stroke-width="0.7" fill="none"/><path transform="translate(966.6,356.1)" d="M-0.90,-2.86 L-0.81,-3.81 L0.81,-3.81 L0.90,-2.86 L2.03,-2.21 L2.90,-2.61 L3.71,-1.21 L2.93,-0.65 L2.93,0.65 L3.71,1.21 L2.90,2.61 L2.03,2.21 L0.90,2.86 L0.81,3.81 L-0.81,3.81 L-0.90,2.86 L-2.03,2.21 L-2.90,2.61 L-3.71,1.21 L-2.93,0.65 L-2.93,-0.65 L-3.71,-1.21 L-2.90,-2.61 L-2.03,-2.21Z" fill="#e4e4e4"/><circle cx="966.6" cy="356.1" r="1.35" fill="#2c2c2c"/><path d="M968.3,358.4 h2.6 v2 h-2.6z" fill="#323232"/><path d="M968.6,359.0 l1,0.9 l1,-0.9" stroke="#e4e4e4" stroke-width="0.6" fill="none"/><path d="M979.2,354.5 l4.2,4.2 m0,-4.2 l-4.2,4.2" stroke="#cdcdcd" stroke-width="0.7" fill="none"/><path transform="translate(966.6,371.6)" d="M-0.90,-2.86 L-0.81,-3.81 L0.81,-3.81 L0.90,-2.86 L2.03,-2.21 L2.90,-2.61 L3.71,-1.21 L2.93,-0.65 L2.93,0.65 L3.71,1.21 L2.90,2.61 L2.03,2.21 L0.90,2.86 L0.81,3.81 L-0.81,3.81 L-0.90,2.86 L-2.03,2.21 L-2.90,2.61 L-3.71,1.21 L-2.93,0.65 L-2.93,-0.65 L-3.71,-1.21 L-2.90,-2.61 L-2.03,-2.21Z" fill="#e4e4e4"/><circle cx="966.6" cy="371.6" r="1.35" fill="#2c2c2c"/><path d="M968.3,373.9 h2.6 v2 h-2.6z" fill="#323232"/><path d="M968.6,374.5 l1,0.9 l1,-0.9" stroke="#e4e4e4" stroke-width="0.6" fill="none"/><path d="M979.2,370.0 l4.2,4.2 m0,-4.2 l-4.2,4.2" stroke="#cdcdcd" stroke-width="0.7" fill="none"/><path transform="translate(966.6,387.1)" d="M-0.90,-2.86 L-0.81,-3.81 L0.81,-3.81 L0.90,-2.86 L2.03,-2.21 L2.90,-2.61 L3.71,-1.21 L2.93,-0.65 L2.93,0.65 L3.71,1.21 L2.90,2.61 L2.03,2.21 L0.90,2.86 L0.81,3.81 L-0.81,3.81 L-0.90,2.86 L-2.03,2.21 L-2.90,2.61 L-3.71,1.21 L-2.93,0.65 L-2.93,-0.65 L-3.71,-1.21 L-2.90,-2.61 L-2.03,-2.21Z" fill="#e4e4e4"/><circle cx="966.6" cy="387.1" r="1.35" fill="#2c2c2c"/><path d="M968.3,389.4 h2.6 v2 h-2.6z" fill="#323232"/><path d="M968.6,390.0 l1,0.9 l1,-0.9" stroke="#e4e4e4" stroke-width="0.6" fill="none"/><path d="M979.2,385.5 l4.2,4.2 m0,-4.2 l-4.2,4.2" stroke="#cdcdcd" stroke-width="0.7" fill="none"/><path d="M980.6,414.1 l2.4,2.3 l2.4,-2.3" fill="none" stroke="#c8c8c8" stroke-width="0.9"/><path d="M980.6,430.1 l2.4,2.3 l2.4,-2.3" fill="none" stroke="#c8c8c8" stroke-width="0.9"/><path d="M980.6,446.2 l2.4,2.3 l2.4,-2.3" fill="none" stroke="#c8c8c8" stroke-width="0.9"/><path d="M980.6,462.2 l2.4,2.3 l2.4,-2.3" fill="none" stroke="#c8c8c8" stroke-width="0.9"/><path d="M893.6,127.1 l2.4,2.3 l2.4,-2.3" fill="none" stroke="#c8c8c8" stroke-width="0.9"/><path d="M980.6,127.1 l2.4,2.3 l2.4,-2.3" fill="none" stroke="#5a5a5a" stroke-width="0.9"/><path d="M980.6,143.1 l2.4,2.3 l2.4,-2.3" fill="none" stroke="#c8c8c8" stroke-width="0.9"/><path d="M978.8,185.8 h5 M981.3,183.3 v5" stroke="#f0f0f0" stroke-width="1.2" fill="none"/><path d="M979.2,521.9 l4.2,4.2 m0,-4.2 l-4.2,4.2" stroke="#cdcdcd" stroke-width="0.7" fill="none"/><path d="M892.6,18.8 l4.6,4.6 m0,-4.6 l-4.6,4.6" stroke="#9c9c9c" stroke-width="0.7" fill="none"/><rect x="909.4" y="126.6" width="6" height="5" rx="0.6" fill="#f0f0f0"/><path d="M910.6,126.8 v-1.6 a1.8,1.8 0 0 1 3.6,0 v1.6" fill="none" stroke="#f0f0f0" stroke-width="1"/><rect x="912" y="128.2" width="0.9" height="1.8" fill="#4a4a4a"/><g fill="#dcdcdc" stroke="#323232" stroke-width="0.5"><circle cx="951.2" cy="199.5" r="2.6"/><circle cx="949.1" cy="202.8" r="2.3"/><circle cx="953.6" cy="202.7" r="2.6"/></g><g><rect x="787" y="34.2" width="9" height="9.2" fill="#e6e6e6"/><rect x="787.6" y="36.2" width="7.8" height="0.7" fill="#3a3a3a"/><rect x="788" y="38.2" width="3" height="0.7" fill="#555"/><rect x="788" y="40.2" width="2.2" height="0.7" fill="#555"/><ellipse cx="793.2" cy="40.6" rx="2.3" ry="1.8" fill="#2c2c2c"/><ellipse cx="793.2" cy="40.6" rx="1.1" ry="0.8" fill="#e6e6e6"/></g><circle cx="808.5" cy="38.4" r="4.3" fill="#e6e6e6"/><path d="M806.6,35.6 a3.4,3.4 0 0 0 3.6,5.2" fill="none" stroke="#2c2c2c" stroke-width="0.9"/><circle cx="809.3" cy="37" r="0.8" fill="#bdbdbd"/><g fill="none" stroke="#d0d0d0" stroke-width="0.9"><rect x="822" y="35.4" width="7.2" height="7.2"/><path d="M822,35.4 l7.2,7.2"/></g><g fill="#d6d6d6"><rect x="821" y="34.4" width="2" height="2"/><rect x="828.2" y="34.4" width="2" height="2"/><rect x="821" y="41.6" width="2" height="2"/><rect x="828.2" y="41.6" width="2" height="2"/></g></svg>
</div>
<div id="rightbar" class="abs">
<div class="abs" style="left:0;top:0;width:1px;height:518px;background:#262626"></div><div class="abs" style="left:18.7px;top:0;width:1px;height:518px;background:#242424"></div>
<div class="abs" style="left:6.7px;top:9.6px;width:9px;height:0.8px;background:#404040"></div>
<svg class="abs" style="left:-1.3px;top:0" width="21" height="517" viewBox="1003 12 21 517">
<circle cx="1013.7" cy="39.7" r="4.3" fill="#e0e0e0"/><circle cx="1015.3" cy="41.2" r="2" fill="#2f2f2f"/><circle cx="1015.3" cy="41.2" r="0.9" fill="#e0e0e0"/><path d="M1010,38.5 q2.5,-2.5 5.5,-2.4" stroke="#2f2f2f" stroke-width="0.6" fill="none"/>
<g fill="none" stroke="#d6d6d6" stroke-width="0.9"><path d="M1010.6,54.6 a4.1,4.1 0 1 1 -0.8,3.4"/><path d="M1013.9,54.8v2.4l1.6,1.2" stroke-width="0.8"/></g><path d="M1009.2,53.3 l2.6,0.3 l-1.8,2.2z" fill="#d6d6d6"/>
<rect x="1009.8" y="70.2" width="7.8" height="7.6" fill="none" stroke="#d6d6d6" stroke-width="0.9"/><rect x="1012.3" y="72.3" width="2.8" height="3.4" fill="none" stroke="#d6d6d6" stroke-width="0.7"/>
</svg></div>
<div id="status" class="abs"><span class="t" style="right:7px;top:2px;font-size:6.6px;transform-origin:100% 50%">Cache Disk Usage: &nbsp;&nbsp; 85% | Version: 7.4.3</span></div>
</body></html>
